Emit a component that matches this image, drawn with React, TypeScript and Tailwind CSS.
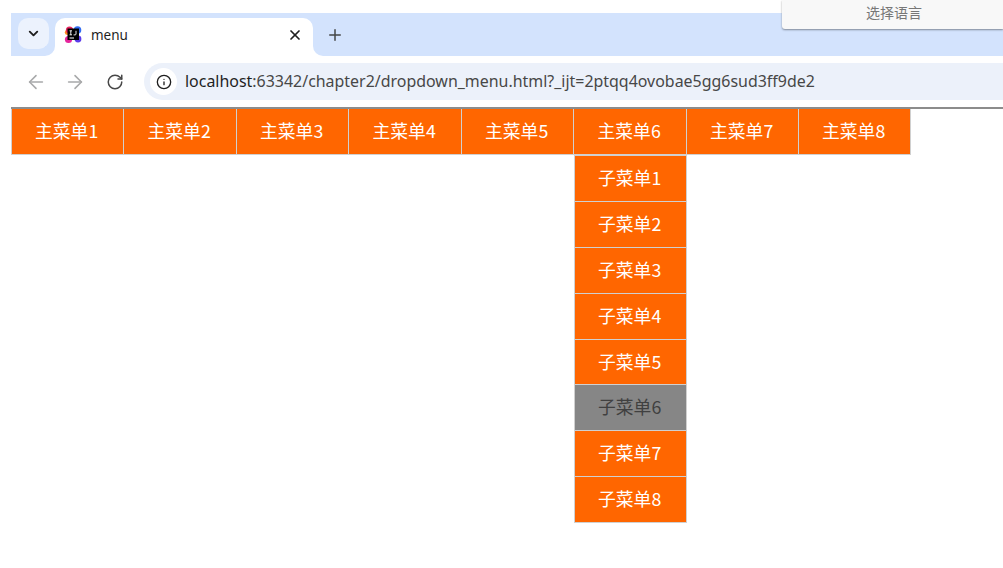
import { ArrowLeft, ArrowRight, ChevronDown, Info, Plus, RotateCw, X } from "lucide-react";

const MAIN_ITEMS = ["主菜单1", "主菜单2", "主菜单3", "主菜单4", "主菜单5", "主菜单6", "主菜单7", "主菜单8"];
const SUB_ITEMS = ["子菜单1", "子菜单2", "子菜单3", "子菜单4", "子菜单5", "子菜单6", "子菜单7", "子菜单8"];

const CJK = "font-['Noto_Sans_CJK_SC','Noto_Sans',sans-serif]";

function Favicon() {
  return (
    <svg width="18" height="18" viewBox="0 0 18 18" className="shrink-0">
      <circle cx="3.2" cy="6.5" r="2.4" fill="#ff8a1f" />
      <circle cx="4.5" cy="13.5" r="3.6" fill="#e5249c" />
      <circle cx="5.5" cy="4" r="3.6" fill="#e8235f" />
      <circle cx="13.5" cy="4" r="3.8" fill="#2f6bf2" />
      <circle cx="14" cy="13" r="3.4" fill="#5b3bea" />
      <rect x="3.5" y="2.5" width="11.5" height="11.5" fill="#000" />
      <rect x="5.5" y="11.5" width="4.5" height="1" fill="#fff" />
      <path d="M5.6 4.8h2.4M6.8 4.8v4M5.6 8.8h2.4M12 4.8v3.2q0 .9-.9.9H9.6" stroke="#fff" strokeWidth="0.9" fill="none" />
    </svg>
  );
}

function TabFlare({ side }: { side: "left" | "right" }) {
  return (
    <div className={`absolute bottom-0 w-[10px] h-[10px] bg-white ${side === "left" ? "-left-[10px]" : "-right-[10px]"}`}>
      <div className={`w-full h-full bg-[#d3e3fd] ${side === "left" ? "rounded-br-[10px]" : "rounded-bl-[10px]"}`} />
    </div>
  );
}

function BrowserChrome() {
  return (
    <div>
      {/* Tab strip */}
      <div className="h-[43px] bg-[#d3e3fd] flex items-start pt-[5px] pl-[7px]">
        <button type="button" className="w-[31px] h-[31px] rounded-[10px] bg-[#ecf2fd] flex items-center justify-center text-[#1f1f1f]">
          <ChevronDown size={15} strokeWidth={3} />
        </button>
        <div className="relative w-[258px] h-[38px] ml-[6px] bg-white rounded-t-[10px] flex items-center pl-[9px] pr-[10px] pb-[4px] gap-[9px]">
          <TabFlare side="left" />
          <TabFlare side="right" />
          <Favicon />
          <span className="flex-1 text-[13.5px] text-[#1f1f1f] font-['Noto_Sans',sans-serif]">menu</span>
          <X size={16} strokeWidth={2.6} className="text-[#1f1f1f]" />
        </div>
        <div className="w-[44px] h-[33px] flex items-center justify-center text-[#444746]">
          <Plus size={18} strokeWidth={2} />
        </div>
      </div>

      {/* Toolbar */}
      <div className="h-[51px] bg-white rounded-tl-[10px] flex items-center pl-[14px]">
        <ArrowLeft size={22} strokeWidth={1.7} className="text-[#a8a9aa]" />
        <ArrowRight size={22} strokeWidth={1.7} className="text-[#a8a9aa] ml-[17px]" />
        <RotateCw size={18} strokeWidth={2} className="text-[#474747] ml-[20px]" />
        <div className="flex-1 h-[37px] ml-[20px] bg-[#ecf1fa] rounded-l-full flex items-center pl-[6px]">
          <div className="w-[27px] h-[27px] rounded-full bg-white flex items-center justify-center text-[#1f1f1f]">
            <Info size={16} strokeWidth={2} />
          </div>
          <span className="ml-[8px] text-[15.95px] text-[#474747] font-['Noto_Sans',sans-serif] whitespace-nowrap">
            <span className="text-[#1f1f1f]">localhost</span>:63342/chapter2/dropdown_menu.html?_ijt=2ptqq4ovobae5gg6sud3ff9de2
          </span>
        </div>
      </div>
    </div>
  );
}

function MainCell({ label, last }: { label: string; last: boolean }) {
  return (
    <div
      className={`h-[46px] pb-[2px] pr-[2px] flex items-center justify-center border-l border-b border-[#d0d0d0] bg-[#ff6600] text-white text-[17.8px] ${CJK} ${
        last ? "border-r" : ""
      }`}
    >
      {label}
    </div>
  );
}

function SubCell({ label, hovered }: { label: string; hovered: boolean }) {
  return (
    <div
      className={`h-[46.875px] -mb-px pb-[2px] pr-[2px] flex items-center justify-center border border-[#d0d0d0] text-[17.8px] ${CJK} ${
        hovered ? "bg-[#868686] text-[#404040]" : "bg-[#ff6600] text-white"
      }`}
    >
      {label}
    </div>
  );
}

export default function App() {
  return (
    <div className="relative h-[568px] w-[1003px] overflow-hidden bg-white pt-[13px] pl-[11px]">
      <BrowserChrome />
      <div className="h-[2px] bg-[#8c8c8c]" />

      {/* Menu */}
      <div className="flex w-[900px] -ml-[0.1px]">
        {MAIN_ITEMS.map((item, i) => (
          <div key={item} className="relative w-[112.5px] shrink-0">
            <MainCell label={item} last={i === MAIN_ITEMS.length - 1} />
            {i === 5 && (
              <div className="absolute left-px w-[112.5px] top-full flex flex-col">
                {SUB_ITEMS.map((sub, j) => (
                  <SubCell key={sub} label={sub} hovered={j === 5} />
                ))}
              </div>
            )}
          </div>
        ))}
      </div>

      {/* Translate popup */}
      <div className="absolute top-0 right-0 w-[221px] h-[29px] bg-[#f8f8f8] rounded-bl-[3px] shadow-[0_1px_2px_rgba(0,0,0,0.4)] flex items-center justify-center pl-[3px] pb-[5px] text-[14px] text-[#777777] font-['Noto_Sans_CJK_SC',sans-serif]">
        选择语言
      </div>
    </div>
  );
}
